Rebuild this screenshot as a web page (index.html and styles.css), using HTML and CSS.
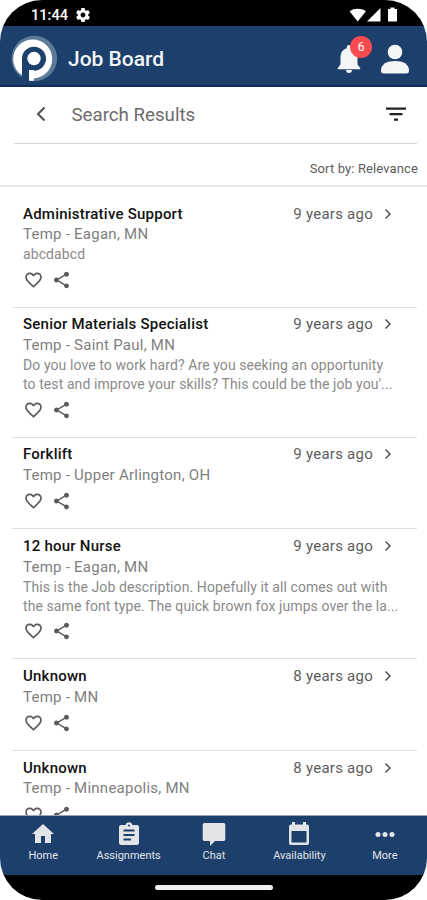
FILE: index.html
```html
<!DOCTYPE html>
<html lang="en">
<head>
  <meta charset="UTF-8">
  <meta name="viewport" content="width=device-width, initial-scale=1.0">
  <title>Job Board</title>
  <link rel="stylesheet" href="styles.css">
</head>
<body>
  <svg width="0" height="0" class="sprite">
    <symbol id="heart" viewBox="0 0 24 24"><path d="M16.5 3c-1.74 0-3.41.81-4.5 2.09C10.91 3.81 9.24 3 7.5 3 4.42 3 2 5.42 2 8.5c0 3.78 3.4 6.86 8.55 11.54L12 21.35l1.45-1.32C18.6 15.36 22 12.28 22 8.5 22 5.42 19.58 3 16.5 3zm-4.4 15.55l-.1.1-.1-.1C7.14 14.24 4 11.39 4 8.5 4 6.5 5.5 5 7.5 5c1.54 0 3.04.99 3.57 2.36h1.87C13.46 5.99 14.96 5 16.5 5c2 0 3.5 1.5 3.5 3.5 0 2.89-3.14 5.74-7.9 10.05z"/></symbol>
    <symbol id="share" viewBox="0 0 24 24"><path d="M18 16.08c-.76 0-1.44.3-1.96.77L8.91 12.7c.05-.23.09-.46.09-.7s-.04-.47-.09-.7l7.05-4.11c.54.5 1.25.81 2.04.81 1.66 0 3-1.34 3-3s-1.34-3-3-3-3 1.34-3 3c0 .24.04.47.09.7L8.04 9.81C7.5 9.31 6.79 9 6 9c-1.66 0-3 1.34-3 3s1.34 3 3 3c.79 0 1.5-.31 2.04-.81l7.12 4.16c-.05.21-.08.43-.08.65 0 1.61 1.31 2.92 2.92 2.92s2.92-1.31 2.92-2.92-1.31-2.92-2.92-2.92z"/></symbol>
    <symbol id="chevron" viewBox="0 0 8 12"><path d="M1.5 1.5L6 6l-4.5 4.5" fill="none" stroke="currentColor" stroke-width="1.4"/></symbol>
  </svg>

  <div class="phone">
    <div class="status-bar">
      <span class="clock">11:44</span>
      <svg class="gear" viewBox="2 2 20 20"><path d="M19.43 12.98c.04-.32.07-.64.07-.98s-.03-.66-.07-.98l2.11-1.65c.19-.15.24-.42.12-.64l-2-3.46c-.12-.22-.39-.3-.61-.22l-2.49 1c-.52-.4-1.08-.73-1.69-.98l-.38-2.65C14.46 2.18 14.25 2 14 2h-4c-.25 0-.46.18-.49.42l-.38 2.65c-.61.25-1.17.59-1.69.98l-2.49-1c-.23-.09-.49 0-.61.22l-2 3.46c-.13.22-.07.49.12.64l2.11 1.65c-.04.32-.07.65-.07.98s.03.66.07.98l-2.11 1.65c-.19.15-.24.42-.12.64l2 3.46c.12.22.39.3.61.22l2.49-1c.52.4 1.08.73 1.69.98l.38 2.65c.03.24.24.42.49.42h4c.25 0 .46-.18.49-.42l.38-2.65c.61-.25 1.17-.59 1.69-.98l2.49 1c.23.09.49 0 .61-.22l2-3.46c.12-.22.07-.49-.12-.64l-2.11-1.65zM12 15.5c-1.93 0-3.5-1.57-3.5-3.5s1.57-3.5 3.5-3.5 3.5 1.57 3.5 3.5-1.57 3.5-3.5 3.5z"/></svg>
      <svg class="signals" viewBox="0 0 50 16">
        <path d="M0.5 4.2C5 .9 12.5 .9 17 4.2L8.7 14.5z"/>
        <path d="M31.5 1v13.5H18z"/>
        <path d="M39 2h2.5V.5h4V2H48v12.5h-9z"/>
      </svg>
    </div>

    <header class="app-bar">
      <svg class="logo" viewBox="0 0 48 48">
        <circle cx="24.3" cy="23.5" r="22.8" fill="#5d7b98"/>
        <circle cx="22.7" cy="24" r="19.5" fill="#fff"/>
        <path d="M12 48V23.500a12 12 0 1 1 12 12.200h-5V48z" fill="#1c3f6b"/>
        <path d="M19 35h5v10.800h-5z" fill="#fff"/>
        <circle cx="24" cy="23.5" r="6.7" fill="#fff"/>
      </svg>
      <h1>Job Board</h1>
      <div class="bell">
        <svg viewBox="0 0 24 28"><path d="M12 28c1.8 0 3-1.2 3-3H9c0 1.8 1.2 3 3 3zM20.5 19.5V12c0-4.5-2.5-7.8-6.3-8.8V2.2a2.2 2.2 0 0 0-4.4 0v1C6 4.2 3.5 7.5 3.5 12v7.5L.8 23v1.2h22.4V23z"/></svg>
        <span class="badge">6</span>
      </div>
      <svg class="person" viewBox="0 0 28 30"><circle cx="14" cy="8" r="7.3"/><path d="M0 26.5C0 20 6 17 14 17s14 3 14 9.500q0 3-2.500 3h-23Q0 29.500 0 26.500z"/></svg>
    </header>

    <div class="search-bar">
      <svg class="back" viewBox="0 0 10 16"><path d="M8.5 1.5L2 8l6.5 6.5" fill="none" stroke="#555" stroke-width="2.2"/></svg>
      <h2>Search Results</h2>
      <svg class="filter" viewBox="0 0 20 14"><path d="M0 .5h20v2.200H0zM3.500 6h13v2.200h-13zM8 11.500h4v2.200H8z"/></svg>
    </div>
    <div class="sort">Sort by: Relevance</div>

    <main class="jobs">
      <article class="job">
        <div class="job-head"><h3>Administrative Support</h3><span class="age">9 years ago</span><svg class="chevron"><use href="#chevron"/></svg></div>
        <p class="place">Temp - Eagan, MN</p>
        <p class="desc">abcdabcd</p>
        <div class="actions"><svg><use href="#heart"/></svg><svg><use href="#share"/></svg></div>
      </article>
      <article class="job">
        <div class="job-head"><h3>Senior Materials Specialist</h3><span class="age">9 years ago</span><svg class="chevron"><use href="#chevron"/></svg></div>
        <p class="place">Temp - Saint Paul, MN</p>
        <p class="desc">Do you love to work hard? Are you seeking an opportunity<br>to test and improve your skills? This could be the job you'...</p>
        <div class="actions"><svg><use href="#heart"/></svg><svg><use href="#share"/></svg></div>
      </article>
      <article class="job">
        <div class="job-head"><h3>Forklift</h3><span class="age">9 years ago</span><svg class="chevron"><use href="#chevron"/></svg></div>
        <p class="place">Temp - Upper Arlington, OH</p>
        <div class="actions"><svg><use href="#heart"/></svg><svg><use href="#share"/></svg></div>
      </article>
      <article class="job">
        <div class="job-head"><h3>12 hour Nurse</h3><span class="age">9 years ago</span><svg class="chevron"><use href="#chevron"/></svg></div>
        <p class="place">Temp - Eagan, MN</p>
        <p class="desc">This is the Job description. Hopefully it all comes out with<br>the same font type. The quick brown fox jumps over the la...</p>
        <div class="actions"><svg><use href="#heart"/></svg><svg><use href="#share"/></svg></div>
      </article>
      <article class="job">
        <div class="job-head"><h3>Unknown</h3><span class="age">8 years ago</span><svg class="chevron"><use href="#chevron"/></svg></div>
        <p class="place">Temp - MN</p>
        <div class="actions"><svg><use href="#heart"/></svg><svg><use href="#share"/></svg></div>
      </article>
      <article class="job">
        <div class="job-head"><h3>Unknown</h3><span class="age">8 years ago</span><svg class="chevron"><use href="#chevron"/></svg></div>
        <p class="place">Temp - Minneapolis, MN</p>
        <div class="actions"><svg><use href="#heart"/></svg><svg><use href="#share"/></svg></div>
      </article>
    </main>

    <nav class="tabs">
      <a class="tab"><svg viewBox="0 0 24 24"><path d="M10 21v-7h4v7h6v-9h3L12 2 1 12h3v9z"/></svg>Home</a>
      <a class="tab"><svg viewBox="0 0 24 24"><path d="M20 3h-4.500a3.600 3.600 0 0 0-7 0H4a2 2 0 0 0-2 2v16a2 2 0 0 0 2 2h16a2 2 0 0 0 2-2V5a2 2 0 0 0-2-2zm-8-.500a1 1 0 1 1 0 2 1 1 0 0 1 0-2zM14 18.500H6.500v-2H14zm3.500-4.500h-11v-2h11zm0-4.500h-11v-2h11z"/></svg>Assignments</a>
      <a class="tab"><svg viewBox="0 0 24 24"><path d="M2.500 1h19A1.800 1.800 0 0 1 23.300 3v14a1.800 1.800 0 0 1-1.800 2H13l-5 5v-5H2.500A1.800 1.800 0 0 1 .7 17V3a1.800 1.800 0 0 1 1.800-2z"/></svg>Chat</a>
      <a class="tab"><svg viewBox="0 0 24 24"><path d="M20 2.500h-1V0h-3v2.500H8V0H5v2.500H4a2 2 0 0 0-2 2V21a2 2 0 0 0 2 2h16a2 2 0 0 0 2-2V4.500a2 2 0 0 0-2-2zM19.500 20.500h-15V9h15z"/></svg>Availability</a>
      <a class="tab"><svg viewBox="0 0 24 24"><circle cx="5" cy="12.500" r="2.500"/><circle cx="12" cy="12.500" r="2.500"/><circle cx="19" cy="12.500" r="2.500"/></svg>More</a>
    </nav>
    <div class="gesture-bar"><span></span></div>
  </div>
</body>
</html>
```
FILE: styles.css
```css
* {
  box-sizing: border-box;
}

body {
  margin: 0;
  background: #fff;
  font-family: Roboto, Arial, sans-serif;
}

h1, h2, h3, p {
  margin: 0;
  font-weight: 400;
}

svg {
  display: block;
  flex: none;
  fill: currentColor;
}

.sprite {
  position: absolute;
}

.phone {
  display: flex;
  flex-direction: column;
  width: 427px;
  height: 900px;
  overflow: hidden;
  border-radius: 42px;
  background: #fff;
}

.status-bar {
  display: flex;
  align-items: center;
  height: 26px;
  flex: none;
  padding: 3px 28px 0 31px;
  background: #000;
  color: #fff;
}

.clock {
  font-size: 14.6px;
  font-weight: 500;
}

.gear {
  width: 14px;
  height: 14px;
  margin-left: 8px;
}

.signals {
  width: 50px;
  height: 16px;
  margin-left: auto;
}

.app-bar {
  display: flex;
  align-items: center;
  height: 61px;
  flex: none;
  padding: 6px 18px 0 10px;
  border-bottom: 2px solid #102c58;
  background: #1c3f6b;
  color: #f4f5f7;
}

.logo {
  width: 48px;
  height: 48px;
}

h1 {
  margin-left: 10px;
  padding-top: 1px;
  font-size: 21px;
  font-weight: 500;
}

.bell {
  position: relative;
  margin-left: auto;
}

.bell svg {
  width: 24px;
  height: 28px;
}

.badge {
  position: absolute;
  top: -9px;
  left: 13px;
  width: 22px;
  height: 22px;
  border-radius: 50%;
  background: #fb4b50;
  color: #fff;
  font-size: 12px;
  line-height: 22px;
  text-align: center;
}

.person {
  width: 28px;
  height: 30px;
  margin-left: 20px;
}

.search-bar {
  display: flex;
  align-items: center;
  height: 57px;
  flex: none;
  margin: 0 10px 0 14px;
  padding: 0 11.5px 2px 22px;
  border-bottom: 1px solid #d8d8d8;
}

.back {
  width: 10px;
  height: 16px;
}

h2 {
  margin-left: 25.5px;
  padding-top: 2px;
  color: #6c6c6c;
  font-size: 18.7px;
}

.filter {
  width: 20px;
  height: 14px;
  margin-left: auto;
  color: #222;
}

.sort {
  height: 43px;
  flex: none;
  padding: 16px 9px 0;
  border-bottom: 2px solid #e8e8e8;
  color: #5c5c5c;
  font-size: 13px;
  letter-spacing: 0.12px;
  line-height: 18px;
  text-align: right;
}

.jobs {
  flex: 1;
  min-height: 0;
  overflow: hidden;
  padding: 10px 10px 0 12px;
}

.job {
  padding: 6.2px 25px 16.9px 11px;
  border-bottom: 1px solid #e0e0e0;
}

.job-head {
  display: flex;
  align-items: center;
  height: 21px;
}

h3 {
  flex: 1;
  color: #111;
  font-size: 15px;
  font-weight: 500;
  letter-spacing: 0.23px;
}

.age {
  color: #5c5c5c;
  font-size: 15px;
  letter-spacing: 0.25px;
}

.chevron {
  width: 8px;
  height: 12px;
  margin-left: 11px;
  color: #444;
}

.place {
  color: #808080;
  font-size: 15px;
  letter-spacing: 0.25px;
  line-height: 21px;
}

.desc {
  color: #8a8a8a;
  font-size: 14px;
  letter-spacing: 0.09px;
  line-height: 19.2px;
  white-space: nowrap;
}

.actions {
  display: flex;
  gap: 7px;
  margin-top: 5.5px;
  color: #5c5c5c;
}

.actions svg {
  width: 21px;
  height: 20px;
}

.tabs {
  display: flex;
  height: 60px;
  flex: none;
  border-top: 1px solid #98a5b8;
  background: #1c3f6b;
  color: #e2e4e8;
}

.tab {
  display: flex;
  flex: 1;
  flex-direction: column;
  align-items: center;
  gap: 3px;
  padding: 6px 0 0 1px;
  font-size: 11px;
}

.tab svg {
  width: 24px;
  height: 24px;
}

.gesture-bar {
  display: flex;
  justify-content: center;
  align-items: center;
  height: 25px;
  flex: none;
  background: #000;
}

.gesture-bar span {
  width: 118px;
  height: 5px;
  border-radius: 3px;
  background: #f0f0f0;
}
```
